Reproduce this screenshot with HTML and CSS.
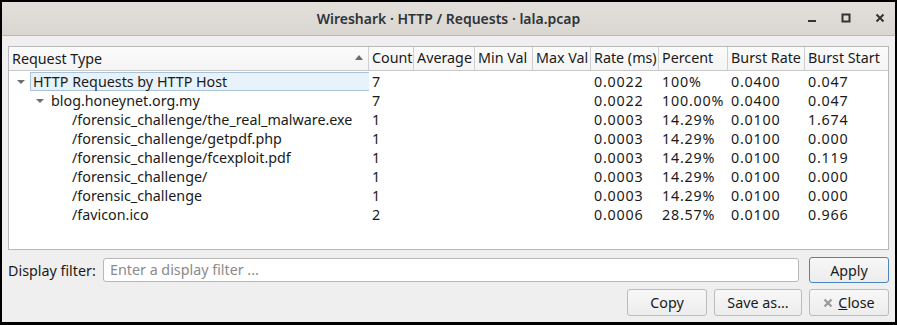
FILE: index.html
```html
<!DOCTYPE html>
<html>
<head>
<meta charset="utf-8">
<link rel="stylesheet" href="styles.css">
</head>
<body>
<div class="window">
  <div class="titlebar">
    <div class="title">Wireshark · HTTP / Requests · lala.pcap</div>
    <div class="controls">
      <span class="ctl"><svg width="10" height="10" viewBox="0 0 10 10"><rect x="1" y="7" width="8" height="2" fill="#2e3436"/></svg></span>
      <span class="ctl"><svg width="10" height="10" viewBox="0 0 10 10"><rect x="1.5" y="1.5" width="7" height="7" fill="none" stroke="#2e3436" stroke-width="2"/></svg></span>
      <span class="ctl"><svg width="10" height="10" viewBox="0 0 10 10"><path d="M1.5 1.5 L8.5 8.5 M8.5 1.5 L1.5 8.5" stroke="#2e3436" stroke-width="2"/></svg></span>
    </div>
  </div>
  <div class="content">
    <div class="tree">
      <div class="row head">
        <div class="c c0 hdr">Request Type<span class="sort"><svg width="8" height="5" viewBox="0 0 8 5"><path d="M0 5 L4 0 L8 5Z" fill="#6a6a6a"/></svg></span></div>
        <div class="c hdr">Count</div>
        <div class="c hdr">Average</div>
        <div class="c hdr">Min Val</div>
        <div class="c hdr">Max Val</div>
        <div class="c hdr">Rate (ms)</div>
        <div class="c hdr">Percent</div>
        <div class="c hdr">Burst Rate</div>
        <div class="c hdr last">Burst Start</div>
      </div>
      <div class="row">
        <div class="c c0 l0"><span class="arrow"></span><span class="sel">HTTP Requests by HTTP Host</span></div>
        <div class="c n">7</div><div class="c"></div><div class="c"></div><div class="c"></div>
        <div class="c n">0.0022</div><div class="c n">100%</div><div class="c n">0.0400</div><div class="c n">0.047</div>
      </div>
      <div class="row">
        <div class="c c0 l1"><span class="arrow"></span>blog.honeynet.org.my</div>
        <div class="c n">7</div><div class="c"></div><div class="c"></div><div class="c"></div>
        <div class="c n">0.0022</div><div class="c n">100.00%</div><div class="c n">0.0400</div><div class="c n">0.047</div>
      </div>
      <div class="row">
        <div class="c c0 l2">/forensic_challenge/the_real_malware.exe</div>
        <div class="c n">1</div><div class="c"></div><div class="c"></div><div class="c"></div>
        <div class="c n">0.0003</div><div class="c n">14.29%</div><div class="c n">0.0100</div><div class="c n">1.674</div>
      </div>
      <div class="row">
        <div class="c c0 l2">/forensic_challenge/getpdf.php</div>
        <div class="c n">1</div><div class="c"></div><div class="c"></div><div class="c"></div>
        <div class="c n">0.0003</div><div class="c n">14.29%</div><div class="c n">0.0100</div><div class="c n">0.000</div>
      </div>
      <div class="row">
        <div class="c c0 l2">/forensic_challenge/fcexploit.pdf</div>
        <div class="c n">1</div><div class="c"></div><div class="c"></div><div class="c"></div>
        <div class="c n">0.0003</div><div class="c n">14.29%</div><div class="c n">0.0100</div><div class="c n">0.119</div>
      </div>
      <div class="row">
        <div class="c c0 l2">/forensic_challenge/</div>
        <div class="c n">1</div><div class="c"></div><div class="c"></div><div class="c"></div>
        <div class="c n">0.0003</div><div class="c n">14.29%</div><div class="c n">0.0100</div><div class="c n">0.000</div>
      </div>
      <div class="row">
        <div class="c c0 l2">/forensic_challenge</div>
        <div class="c n">1</div><div class="c"></div><div class="c"></div><div class="c"></div>
        <div class="c n">0.0003</div><div class="c n">14.29%</div><div class="c n">0.0100</div><div class="c n">0.000</div>
      </div>
      <div class="row">
        <div class="c c0 l2">/favicon.ico</div>
        <div class="c n">2</div><div class="c"></div><div class="c"></div><div class="c"></div>
        <div class="c n">0.0006</div><div class="c n">28.57%</div><div class="c n">0.0100</div><div class="c n">0.966</div>
      </div>
    </div>
    <div class="filter">
      <label class="flabel">Display filter:</label>
      <div class="input">Enter a display filter ...</div>
      <button class="btn apply">Apply</button>
    </div>
    <div class="buttons">
      <button class="btn">Copy</button>
      <button class="btn save">Save as...</button>
      <button class="btn close"><svg width="10" height="10" viewBox="0 0 10 10"><path d="M1.5 1.5 L8.5 8.5 M8.5 1.5 L1.5 8.5" stroke="#9a9a9a" stroke-width="2.2"/></svg><span><u>C</u>lose</span></button>
    </div>
  </div>
</div>
</body>
</html>
```

FILE: styles.css
```css
html, body {
  margin: 0;
  padding: 0;
  background: #000;
}
body {
  width: 897px;
  height: 325px;
  overflow: hidden;
  font-family: "Noto Sans", "DejaVu Sans", sans-serif;
  font-size: 14.3px;
  color: #1a1a1a;
}
.window {
  margin: 2px 2px 0 2px;
  width: 893px;
  height: 320px;
  background: #efefef;
  display: flex;
  flex-direction: column;
}
.titlebar {
  height: 33px;
  background: linear-gradient(#e2dfdb, #dad6d2);
  border-bottom: 1px solid #bdb8b3;
  display: flex;
  align-items: center;
  justify-content: center;
  position: relative;
}
.title {
  font-weight: 600;
  font-size: 14px;
  color: #2e3436;
}
.controls {
  position: absolute;
  right: 10px;
  top: 11px;
  display: flex;
  gap: 24px;
}
.ctl {
  width: 10px;
  height: 10px;
  display: block;
}
.ctl svg { display: block; }
.content {
  flex: 1;
  padding: 10px 6px 0 6px;
  display: flex;
  flex-direction: column;
}
.tree {
  height: 202px;
  background: #fff;
  border: 1px solid #b8b8b8;
  overflow: hidden;
}
.row {
  display: grid;
  grid-template-columns: 360px 45px 61px 58px 58px 68px 69px 77px 1fr;
  height: 19px;
  line-height: 19px;
  white-space: nowrap;
}
.row.head {
  height: 23px;
  line-height: 22px;
  background: linear-gradient(#fbfbfb, #f4f4f4);
  border-bottom: 1px solid #c8c8c8;
  margin-bottom: 1px;
}
.c {
  padding-left: 3px;
  overflow: hidden;
}
.n {
  letter-spacing: 0.8px;
}
.hdr {
  border-right: 1px solid #cfcfcf;
  color: #1a1a1a;
}
.hdr.last { border-right: none; }
.c0.hdr {
  display: flex;
  justify-content: space-between;
  align-items: center;
}
.sort {
  display: block;
  margin-right: 5px;
  line-height: 0;
  margin-top: -2px;
}
.l0 { padding-left: 8px; display: flex; align-items: center; }
.l1 { padding-left: 27px; display: flex; align-items: center; }
.l2 { padding-left: 63px; }
.arrow {
  width: 0;
  height: 0;
  border-left: 4px solid transparent;
  border-right: 4px solid transparent;
  border-top: 4px solid #6e6e6e;
  margin-right: 7px;
  flex: none;
}
.sel {
  flex: 1;
  background: #e8f2fa;
  border: 1px solid #a8c4dc;
  border-right: none;
  height: 17px;
  line-height: 17px;
  padding-left: 2px;
  margin-left: -2px;
}
.filter {
  display: flex;
  align-items: center;
  margin-top: 7px;
  height: 26px;
}
.flabel {
  color: #1a1a1a;
  width: 95px;
  flex: none;
}
.input {
  flex: 1;
  height: 22px;
  line-height: 22px;
  border: 1px solid #b8b8b8;
  border-radius: 3px;
  background: #fff;
  color: #8a8a8a;
  padding-left: 6px;
  margin-right: 10px;
}
.btn {
  font-family: "Noto Sans", "DejaVu Sans", sans-serif;
  font-size: 14.3px;
  color: #1a1a1a;
  width: 80px;
  height: 27px;
  border: 1px solid #bcbcbc;
  border-radius: 3px;
  background: linear-gradient(#f8f8f8, #ececec);
  padding: 0;
  display: flex;
  align-items: center;
  justify-content: center;
  flex: none;
}
.apply {
  border-color: #4a86bd;
  height: 26px;
}
.buttons {
  display: flex;
  justify-content: flex-end;
  gap: 7px;
  margin-top: 6px;
}
.save { width: 88px; }
.close { gap: 5px; }
.close svg { display: block; }
```
